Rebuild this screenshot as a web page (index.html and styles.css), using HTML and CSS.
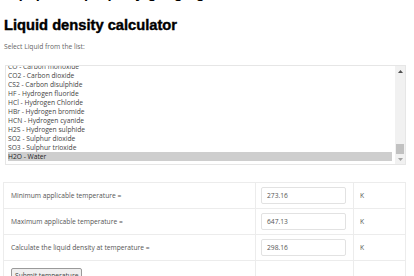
FILE: index.html
```html
<!DOCTYPE html>
<html>
<head>
<meta charset="utf-8">
<link rel="stylesheet" href="styles.css">
</head>
<body>
<div class="page">
  <h2 class="prev">Equipment property gauging tools</h2>
  <h2 class="title">Liquid density calculator</h2>
  <p class="label">Select Liquid from the list:</p>
  <div class="listbox">
    <div class="viewport">
      <div class="options">
        <div class="opt">CO - Carbon monoxide</div>
        <div class="opt">CO2 - Carbon dioxide</div>
        <div class="opt">CS2 - Carbon disulphide</div>
        <div class="opt">HF - Hydrogen fluoride</div>
        <div class="opt">HCl - Hydrogen Chloride</div>
        <div class="opt">HBr - Hydrogen bromide</div>
        <div class="opt">HCN - Hydrogen cyanide</div>
        <div class="opt">H2S - Hydrogen sulphide</div>
        <div class="opt">SO2 - Sulphur dioxide</div>
        <div class="opt">SO3 - Sulphur trioxide</div>
        <div class="opt selected">H2O - Water</div>
      </div>
    </div>
    <div class="scrollbar">
      <div class="arrow up"><svg width="5" height="3" viewBox="0 0 5 3"><path d="M0 3 L2.5 0 L5 3 Z" fill="#505050"/></svg></div>
      <div class="track"><div class="thumb"></div></div>
      <div class="arrow down"><svg width="5" height="3" viewBox="0 0 5 3"><path d="M0 0 L2.5 3 L5 0 Z" fill="#a3a3a3"/></svg></div>
    </div>
  </div>
  <table class="form">
    <tr>
      <td class="c1">Minimum applicable temperature =</td>
      <td class="c2"><div class="input">273.16</div></td>
      <td class="c3">K</td>
    </tr>
    <tr>
      <td class="c1">Maximum applicable temperature =</td>
      <td class="c2"><div class="input">647.13</div></td>
      <td class="c3">K</td>
    </tr>
    <tr>
      <td class="c1">Calculate the liquid density at temperature =</td>
      <td class="c2"><div class="input">298.16</div></td>
      <td class="c3">K</td>
    </tr>
    <tr>
      <td class="c1 btncell"><button class="submit">Submit temperature</button></td>
      <td class="c2"></td>
      <td class="c3"></td>
    </tr>
  </table>
</div>
</body>
</html>
```

FILE: styles.css
```css
html, body {
  margin: 0;
  padding: 0;
  background: #ffffff;
}
body {
  font-family: "Open Sans", "Liberation Sans", sans-serif;
  color: #555555;
  overflow: hidden;
}
.page {
  padding: 0 8px 0 4px;
}
.prev {
  margin: -15px 0 0 0;
  font-family: "Liberation Sans", Arial, sans-serif;
  font-weight: bold;
  font-size: 14.7px;
  line-height: 17px;
  height: 17px;
  color: #000;
  white-space: nowrap;
  overflow: hidden;
}
.title {
  margin: 15px 0 0 0;
  font-family: "Liberation Sans", Arial, sans-serif;
  font-weight: bold;
  font-size: 14.7px;
  line-height: 17px;
  color: #000;
  -webkit-text-stroke: 0.4px #000;
}
.label {
  margin: 8px 0 0 0;
  font-size: 6.7px;
  line-height: 9px;
  color: #666;
}
.listbox {
  margin: 14px 0 0 1px;
  height: 98px;
  border: 1px solid #e6e6e6;
  display: flex;
}
.viewport {
  flex: 1;
  overflow: hidden;
  padding-left: 2px;
}
.options {
  margin-top: -4px;
}
.opt {
  height: 9px;
  line-height: 9px;
  font-size: 6.7px;
  color: #444;
  white-space: nowrap;
}
.opt.selected {
  background: #cecece;
  color: #222;
  margin-right: 3px;
}
.scrollbar {
  width: 10px;
  background: #f1f1f1;
  display: flex;
  flex-direction: column;
}
.arrow {
  height: 10px;
  display: flex;
  align-items: center;
  justify-content: center;
}
.track {
  flex: 1;
  display: flex;
  flex-direction: column;
  justify-content: flex-end;
  padding: 0 1px;
}
.thumb {
  height: 10px;
  background: #c1c1c1;
}
.form {
  margin: 17px 0 0 -1px;
  border-collapse: collapse;
  width: 403px;
  font-size: 6.7px;
  color: #555;
}
.form td {
  border: 1px solid #ececec;
  height: 25px;
  padding: 0;
  vertical-align: middle;
}
.c1 {
  padding-left: 7px !important;
  width: 244px;
}
.c2 {
  width: 97px;
}
.c3 {
  padding-left: 6px !important;
}
.input {
  margin-left: 5px;
  width: 78px;
  height: 15px;
  border: 1px solid #e2e2e2;
  border-radius: 2px;
  line-height: 15px;
  padding-left: 5px;
  box-sizing: content-box;
  color: #555;
}
.btncell {
  vertical-align: top !important;
  padding-top: 7px !important;
}
.submit {
  font-family: "Open Sans", sans-serif;
  font-size: 6.7px;
  color: #444;
  background: #efefef;
  border: 1px solid #9a9a9a;
  border-radius: 2px;
  padding: 1px 3px;
  height: 14px;
  margin: 0;
}
```
